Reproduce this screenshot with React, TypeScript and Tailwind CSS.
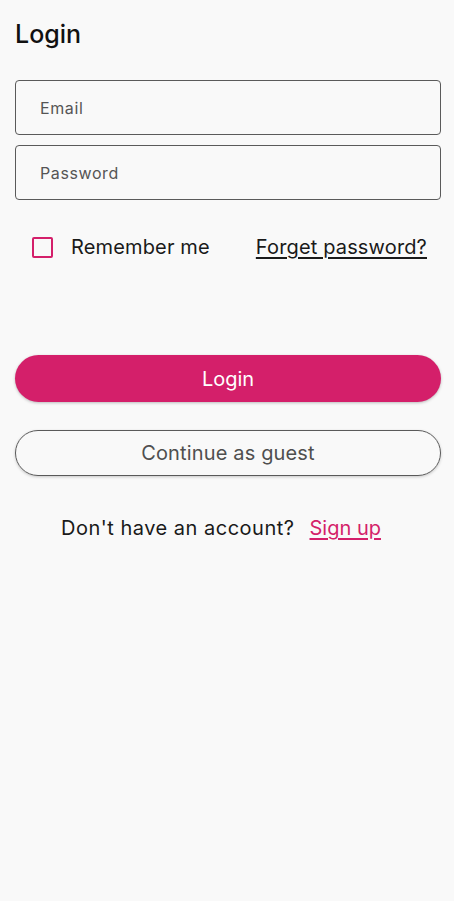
export default function App() {
  return (
    <div className="min-h-[901px] w-full bg-[#f9f9f9] pl-[15px] pr-[13px] font-['Inter',sans-serif]">
      <h1 className="pt-[18px] text-[25px] font-medium leading-[32px] text-[#111111]">Login</h1>

      <div className="mt-[30px] flex flex-col gap-[10px]">
        <input
          type="email"
          placeholder="Email"
          className="h-[55px] w-full rounded-[4px] border border-[#5a5a5a] bg-transparent px-[24px] text-[16px] tracking-[0.6px] text-[#333] outline-none placeholder:text-[#555555]"
        />
        <input
          type="password"
          placeholder="Password"
          className="h-[55px] w-full rounded-[4px] border border-[#5a5a5a] bg-transparent px-[24px] text-[16px] tracking-[0.6px] text-[#333] outline-none placeholder:text-[#555555]"
        />
      </div>

      <div className="mt-[33px] flex items-center justify-between pl-[17px] pr-[14px] text-[20px] leading-[28px] tracking-[0.15px] text-[#1a1a1a]">
        <label className="flex items-center gap-[18px]">
          <span className="block h-[21px] w-[21px] rounded-[2px] border-2 border-[#d41f6a]" />
          <span>Remember me</span>
        </label>
        <a className="underline underline-offset-[3px]">Forget password?</a>
      </div>

      <button className="mt-[94px] flex h-[47px] w-full items-center justify-center rounded-full bg-[#d41f6a] text-[20px] text-white shadow-[0_1px_3px_rgba(0,0,0,0.25)]">
        Login
      </button>

      <button className="mt-[28px] flex h-[46px] w-full items-center justify-center rounded-full border border-[#5a5a5a] text-[20px] tracking-[0.15px] text-[#4f4f4f] shadow-[0_1px_3px_rgba(0,0,0,0.2)]">
        Continue as guest
      </button>

      <p className="mt-[38px] flex justify-center gap-[15px] pr-[14px] text-[20px] leading-[28px] text-[#1a1a1a]">
        <span className="tracking-[0.5px]">Don't have an account?</span>
        <a className="text-[#d41f6a] underline underline-offset-[3px]">Sign up</a>
      </p>
    </div>
  );
}
